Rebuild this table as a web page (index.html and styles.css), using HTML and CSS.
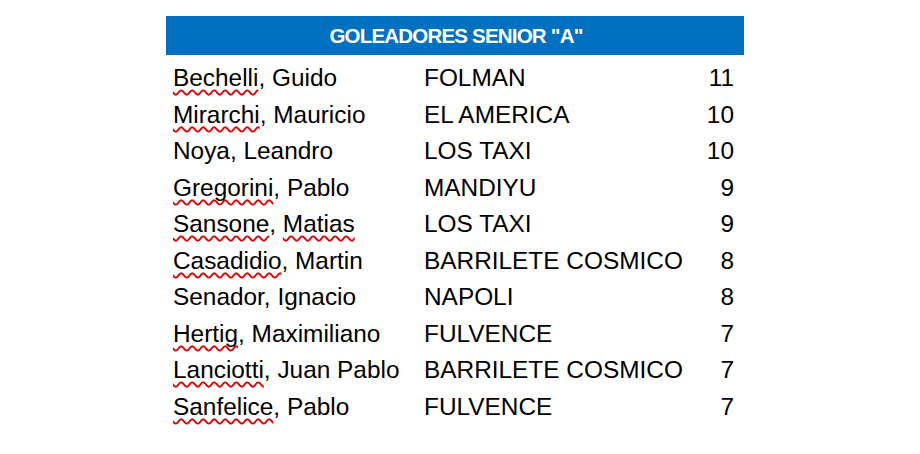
FILE: index.html
```html
<!DOCTYPE html>
<html lang="es">
<head>
<meta charset="utf-8">
<title>Goleadores Senior A</title>
<link rel="stylesheet" href="styles.css">
</head>
<body>
<div class="sheet">
  <div class="title">GOLEADORES SENIOR "A"</div>
  <div class="rows">
    <div class="row"><span class="name"><span class="sp">Bechelli</span>, Guido</span><span class="team">FOLMAN</span><span class="goals">11</span></div>
    <div class="row"><span class="name"><span class="sp">Mirarchi</span>, Mauricio</span><span class="team">EL AMERICA</span><span class="goals">10</span></div>
    <div class="row"><span class="name">Noya, Leandro</span><span class="team">LOS TAXI</span><span class="goals">10</span></div>
    <div class="row"><span class="name"><span class="sp">Gregorini</span>, Pablo</span><span class="team">MANDIYU</span><span class="goals">9</span></div>
    <div class="row"><span class="name"><span class="sp">Sansone</span>, <span class="sp">Matias</span></span><span class="team">LOS TAXI</span><span class="goals">9</span></div>
    <div class="row"><span class="name"><span class="sp">Casadidio</span>, Martin</span><span class="team">BARRILETE COSMICO</span><span class="goals">8</span></div>
    <div class="row"><span class="name">Senador, Ignacio</span><span class="team">NAPOLI</span><span class="goals">8</span></div>
    <div class="row"><span class="name"><span class="sp">Hertig</span>, Maximiliano</span><span class="team">FULVENCE</span><span class="goals">7</span></div>
    <div class="row"><span class="name"><span class="sp">Lanciotti</span>, Juan Pablo</span><span class="team">BARRILETE COSMICO</span><span class="goals">7</span></div>
    <div class="row"><span class="name"><span class="sp">Sanfelice</span>, Pablo</span><span class="team">FULVENCE</span><span class="goals">7</span></div>
  </div>
</div>
</body>
</html>
```
FILE: styles.css
```css
html, body {
  margin: 0;
  padding: 0;
  background: #ffffff;
}
body {
  padding: 16px 0 0 166px;
  font-family: "Liberation Sans", Arial, sans-serif;
  color: #000000;
}
.sheet {
  width: 578px;
}
.title {
  height: 39px;
  background: #0070c0;
  color: #ffffff;
  font-weight: bold;
  font-size: 20.5px;
  letter-spacing: -0.8px;
  display: flex;
  align-items: center;
  justify-content: center;
  padding-left: 2px;
}
.rows {
  margin-top: 5px;
  display: flex;
  flex-direction: column;
}
.row {
  height: 36.5px;
  display: grid;
  grid-template-columns: 251px minmax(0, 1fr) 40px;
  align-items: center;
  font-size: 24.4px;
  padding: 0 10px 0 7px;
  white-space: nowrap;
}
.goals {
  text-align: right;
}
.sp {
  text-decoration: underline wavy #e00000;
  text-decoration-thickness: 1.5px;
  text-underline-offset: 3px;
  text-decoration-skip-ink: none;
}
```
